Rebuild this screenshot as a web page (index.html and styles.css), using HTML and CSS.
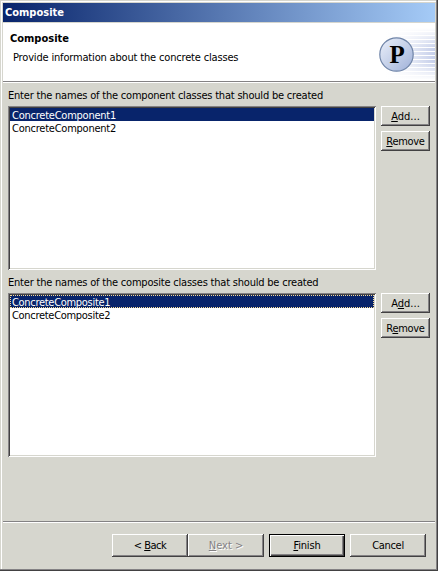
FILE: index.html
```html
<!DOCTYPE html>
<html lang="en">
<head>
<meta charset="utf-8">
<title>Composite</title>
<link rel="stylesheet" href="styles.css">
</head>
<body>
<div class="window">
  <div class="titlebar"><span class="bold">Composite</span></div>
  <header class="banner">
    <div class="intro">
      <h1 class="bold">Composite</h1>
      <p><span class="t-provide">Provide information about the concrete classes</span></p>
    </div>
    <svg class="logo" width="65" height="58" viewBox="0 0 65 58">
      <defs>
        <linearGradient id="fade" x1="0" x2="1" y1="0" y2="0"><stop offset="0" stop-color="#fff"/><stop offset=".35" stop-color="#fff" stop-opacity=".75"/><stop offset="1" stop-color="#fff" stop-opacity="0"/></linearGradient>
        <linearGradient id="vfade" x1="0" x2="0" y1="0" y2="1"><stop offset="0" stop-color="#fff"/><stop offset=".4" stop-color="#fff" stop-opacity="0"/><stop offset=".65" stop-color="#fff" stop-opacity="0"/><stop offset="1" stop-color="#fff"/></linearGradient>
        <linearGradient id="ball" x1="0" x2="1" y1="0" y2="1"><stop offset=".1" stop-color="#e4eaf6"/><stop offset=".55" stop-color="#c2cee8"/><stop offset="1" stop-color="#9fb0d8"/></linearGradient>
        <pattern id="lines" width="65" height="4" y="1" patternUnits="userSpaceOnUse"><rect width="65" height="3" fill="#c6cfea"/></pattern>
      </defs>
      <rect x="16" y="5" width="49" height="52" fill="url(#lines)"/>
      <rect x="16" y="5" width="49" height="52" fill="url(#fade)"/>
      <rect x="16" y="5" width="49" height="52" fill="url(#vfade)"/>
      <circle cx="26.5" cy="31.5" r="16.7" fill="url(#ball)" stroke="#7085a8" stroke-width="1.2"/>
      <text x="27.2" y="40" text-anchor="middle" class="letter">P</text>
    </svg>
  </header>
  <main class="content">
    <section class="group">
      <p class="label"><span class="t-label1">Enter the names of the component classes that should be created</span></p>
      <div class="row">
        <ul class="list">
          <li class="selected"><span class="t-item1">ConcreteComponent1</span></li>
          <li><span class="t-item1">ConcreteComponent2</span></li>
        </ul>
        <div class="actions">
          <button><span class="t-add"><u>A</u>dd...</span></button>
          <button><span class="t-remove"><u>R</u>emove</span></button>
        </div>
      </div>
    </section>
    <section class="group">
      <p class="label"><span class="t-label2">Enter the names of the composite classes that should be created</span></p>
      <div class="row">
        <ul class="list">
          <li class="selected focused"><span class="t-item2">ConcreteComposite1</span></li>
          <li><span class="t-item2">ConcreteComposite2</span></li>
        </ul>
        <div class="actions">
          <button><span class="t-add">A<u>d</u>d...</span></button>
          <button><span class="t-remove">R<u>e</u>move</span></button>
        </div>
      </div>
    </section>
  </main>
  <footer class="footer">
    <div class="pair">
      <button><span class="t-back">&lt; <u>B</u>ack</span></button>
      <button class="disabled"><span class="t-next"><u>N</u>ext &gt;</span></button>
    </div>
    <button class="default"><span class="t-finish"><u>F</u>inish</span></button>
    <button><span class="t-cancel">Cancel</span></button>
  </footer>
</div>
</body>
</html>
```

FILE: styles.css
```css
* { box-sizing: border-box; margin: 0; padding: 0; }
body { width: 438px; height: 571px; overflow: hidden; background: #d6d6ce; }
.window {
  display: flex; flex-direction: column;
  width: 438px; height: 571px; padding: 3px;
  background: #d6d6ce; color: #000;
  font: 11px/13px "DejaVu Sans Condensed", "DejaVu Sans", sans-serif;
  font-stretch: condensed;
  white-space: nowrap;
  box-shadow: inset -1px -1px #424142, inset -2px -2px #848284, inset 1px 1px #d6d6ce, inset 2px 2px #fff;
}
.bold { font: bold 11px/13px "DejaVu Sans Condensed", "DejaVu Sans", sans-serif; font-stretch: condensed; }
.titlebar {
  height: 19px; padding: 3px 2px;
  background: linear-gradient(90deg, #08246b, #a5cbf7);
  color: #fff;
}
.banner {
  display: flex; justify-content: space-between;
  height: 60px; margin-top: 1px;
  background: #fff; border-bottom: 1px solid #fff;
  box-shadow: inset 0 -1px #848284;
}
.intro { padding: 9px 0 0 7px; }
.intro p { margin-top: 6px; padding-left: 3px; }
.logo { display: block; }
.letter { font: bold 25px "Liberation Serif", serif; }
.content { flex: 1; padding: 6px 5px 0; }
.group { height: 187px; }
.label { height: 17px; }
.row { display: flex; gap: 5px; }
.list {
  width: 368px; height: 164px; padding: 2px;
  background: #fff; list-style: none;
  box-shadow: inset 1px 1px #848284, inset -1px -1px #fff, inset 2px 2px #424142, inset -2px -2px #d6d6ce;
}
.list li { height: 13px; padding-left: 2px; line-height: 15px; }
.list .selected { background: #08246b; color: #fff; }
.list .focused { outline: 1px dotted #f7db94; outline-offset: -1px; }
.actions { display: flex; flex-direction: column; gap: 5px; }
button {
  display: flex; align-items: center; justify-content: center;
  width: 76px; height: 23px; border: 0;
  background: #d6d6ce; color: #000; font: inherit;
  box-shadow: inset -1px -1px #424142, inset 1px 1px #fff, inset -2px -2px #848284;
}
.actions button { width: 49px; height: 20px; }
u { text-decoration: underline; text-underline-offset: 1px; text-decoration-thickness: 1px; text-decoration-skip-ink: none; }
.t-provide { letter-spacing: -0.17px; }
.t-label1, .t-label2 { letter-spacing: -0.205px; }
.t-item1 { letter-spacing: -0.24px; }
.t-item2 { letter-spacing: -0.3px; }
.t-remove { letter-spacing: -0.3px; }
.t-back { letter-spacing: -0.5px; }
.t-finish { letter-spacing: -0.15px; }
.t-cancel { letter-spacing: -0.3px; }
.footer {
  display: flex; gap: 5px; justify-content: flex-end;
  height: 47px; padding: 12px 9px 0 0;
  border-top: 1px solid #848284;
  box-shadow: inset 0 1px #fff;
}
.pair { display: flex; }
.disabled { color: #848284; text-shadow: 1px 1px #fff; }
.default { box-shadow: inset 0 0 0 1px #000, inset 2px 2px #fff, inset -2px -2px #424142, inset -3px -3px #848284; }
```
